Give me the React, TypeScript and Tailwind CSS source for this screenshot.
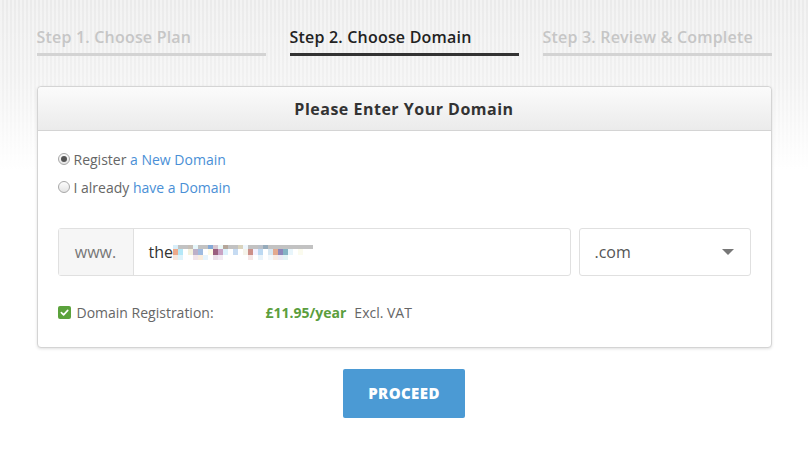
const blurTop = ['#d8eef9', '#c2c2c2', '#c2c2c2', '#c6bfb8', '#e6f7fb', '#c2c2c2', '#c2c2c2', '#86a9d6', '#d6c6cf', '#e9f7f6', '#b5a69a', '#c2c2c2', '#c2c2c2', '#d9d3bd', '#eef6fd', '#c2c2c2', '#c2c2c2', '#bcc1c9', '#96abbb', '#c2c2c2', '#c2c2c2', '#c2c2c2', '#c2c2c2', '#c2c2c2', '#c2c2c2', '#c2c2c2', '#c2c2c2', '#c2c2c2']
const blurMid = ['#eda98a', '#b4e8f8', '#ffffff', '#f4f1dc', '#bdb0c8', '#9fbbe0', '#ffffff', '#fefbe6', '#9b5f7e', '#c9a3c4', '#ddf1fc', '#ffffff', '#c6dbf2', '#ffffff', '#f5f3ea', '#cc8f88', '#f2f0ff', '#bcd9f2', '#ffffff', '#d6e7f2', '#e3a98e', '#8e86ba', '#84b3c4', '#e8f5fb', '#ffffff', '#fbfbee', '#ffffff', '#ffffff']
const blurBot = ['#f7e8df', '#def3fb', '#ffffff', '#ffffff', '#f2e5ea', '#f9ecdd', '#e7f4fb', '#ffffff', '#ebe0e8', '#f2eaf2', '#ffffff', '#ffffff', '#ffffff', '#ffffff', '#ffffff', '#f5e6e6', '#ffffff', '#e9f3fa', '#ffffff', '#f3f8fb', '#f7ebe4', '#eceaf4', '#e4f3f5', '#ffffff', '#ffffff', '#ffffff', '#ffffff', '#ffffff']

function BlurRow({ colors, h }: { colors: string[]; h: string }) {
  return (
    <div className="flex">
      {colors.map((c, i) => (
        <div key={i} className={`w-[5px] ${h}`} style={{ backgroundColor: c }} />
      ))}
    </div>
  )
}

const steps = [
  { label: 'Step 1. Choose Plan', active: false },
  { label: 'Step 2. Choose Domain', active: true },
  { label: 'Step 3. Review & Complete', active: false },
]

export default function App() {
  return (
    <div
      className="min-h-[460px] w-full bg-[image:linear-gradient(to_bottom,rgba(255,255,255,0)_0px,rgba(255,255,255,0.3)_80px,#ffffff_170px),repeating-linear-gradient(90deg,#f3f3f3_0px,#f3f3f3_2px,#ebebeb_2px,#ebebeb_4px)] font-['Open_Sans',sans-serif]"
    >
      <div className="mx-auto w-[735px] pt-[26px]">
        <div className="grid grid-cols-3 gap-6">
          {steps.map((s) => (
            <div key={s.label}>
              <div
                className={`h-[22px] text-[16px] font-semibold leading-[22px] tracking-[0.2px] ${
                  s.active ? 'text-[#222222]' : 'text-[#c6c6c6]'
                }`}
              >
                {s.label}
              </div>
              <div className={`mt-[5px] h-[3px] ${s.active ? 'bg-[#333333]' : 'bg-[#d3d3d3]'}`} />
            </div>
          ))}
        </div>

        <div className="mt-[30px] rounded-[4px] border border-[#d4d4d4] bg-white shadow-[0_1px_3px_rgba(0,0,0,0.12)]">
          <div className="flex h-[44px] items-center justify-center rounded-t-[4px] border-b border-[#d4d4d4] bg-[linear-gradient(to_bottom,#fbfbfb,#ebebeb)]">
            <span className="text-[16px] font-bold tracking-[0.5px] text-[#333333]">Please Enter Your Domain</span>
          </div>

          <div className="px-5 pt-[14px] pb-[25px]">
            <div className="flex h-[28px] items-center text-[14px] text-[#666666]">
              <span className="mr-[4px] flex h-[12px] w-[12px] items-center justify-center rounded-full border border-[#a8a8a8] bg-[linear-gradient(#fdfdfd,#e4e4e4)]">
                <span className="h-[6px] w-[6px] rounded-full bg-[#555555]" />
              </span>
              Register&nbsp;<span className="text-[#4a8fd6]">a New Domain</span>
            </div>
            <div className="flex h-[28px] items-center text-[14px] text-[#666666]">
              <span className="mr-[4px] h-[12px] w-[12px] rounded-full border border-[#a8a8a8] bg-[linear-gradient(#fdfdfd,#e4e4e4)]" />
              I already&nbsp;<span className="text-[#4a8fd6]">have a Domain</span>
            </div>

            <div className="mt-[27px] flex h-[48px] gap-2">
              <div className="flex w-[513px] rounded-[3px] border border-[#e0e0e0]">
                <div className="flex w-[75px] items-center justify-center border-r border-[#e0e0e0] bg-[#f6f6f6] text-[16px] text-[#777777]">
                  www.
                </div>
                <div className="flex flex-1 items-center pl-[15px] text-[16px] text-[#333333]">
                  <span>the</span>
                  <div className="mt-[1px] flex flex-col">
                    <BlurRow colors={blurTop} h="h-[4px]" />
                    <BlurRow colors={blurMid} h="h-[6px]" />
                    <BlurRow colors={blurBot} h="h-[5px]" />
                  </div>
                </div>
              </div>
              <div className="flex flex-1 items-center justify-between rounded-[3px] border border-[#e0e0e0] pr-[16px] pl-[15px] text-[16px] text-[#555555]">
                <span>.com</span>
                <span className="h-0 w-0 border-x-[6px] border-t-[6px] border-x-transparent border-t-[#777777]" />
              </div>
            </div>

            <div className="mt-[26px] flex h-[20px] items-center text-[14px] text-[#666666]">
              <span className="flex h-[13px] w-[13px] items-center justify-center rounded-[2px] bg-[#5ba23c]">
                <svg width="9" height="9" viewBox="0 0 10 10" fill="none">
                  <path d="M1.5 5.2 L4 7.6 L8.6 2.6" stroke="#ffffff" strokeWidth="1.8" strokeLinecap="round" strokeLinejoin="round" />
                </svg>
              </span>
              <span className="ml-[6px] w-[189px]">Domain Registration:</span>
              <span className="font-bold text-[#5b9e3d]">£11.95/year</span>
              <span className="ml-[8px]">Excl. VAT</span>
            </div>
          </div>
        </div>

        <div className="mt-[21px] flex justify-center">
          <button className="h-[49px] w-[122px] rounded-[2px] bg-[#4b9ad4] text-[15px] font-extrabold tracking-[0.4px] text-white">
            PROCEED
          </button>
        </div>
      </div>
    </div>
  )
}
